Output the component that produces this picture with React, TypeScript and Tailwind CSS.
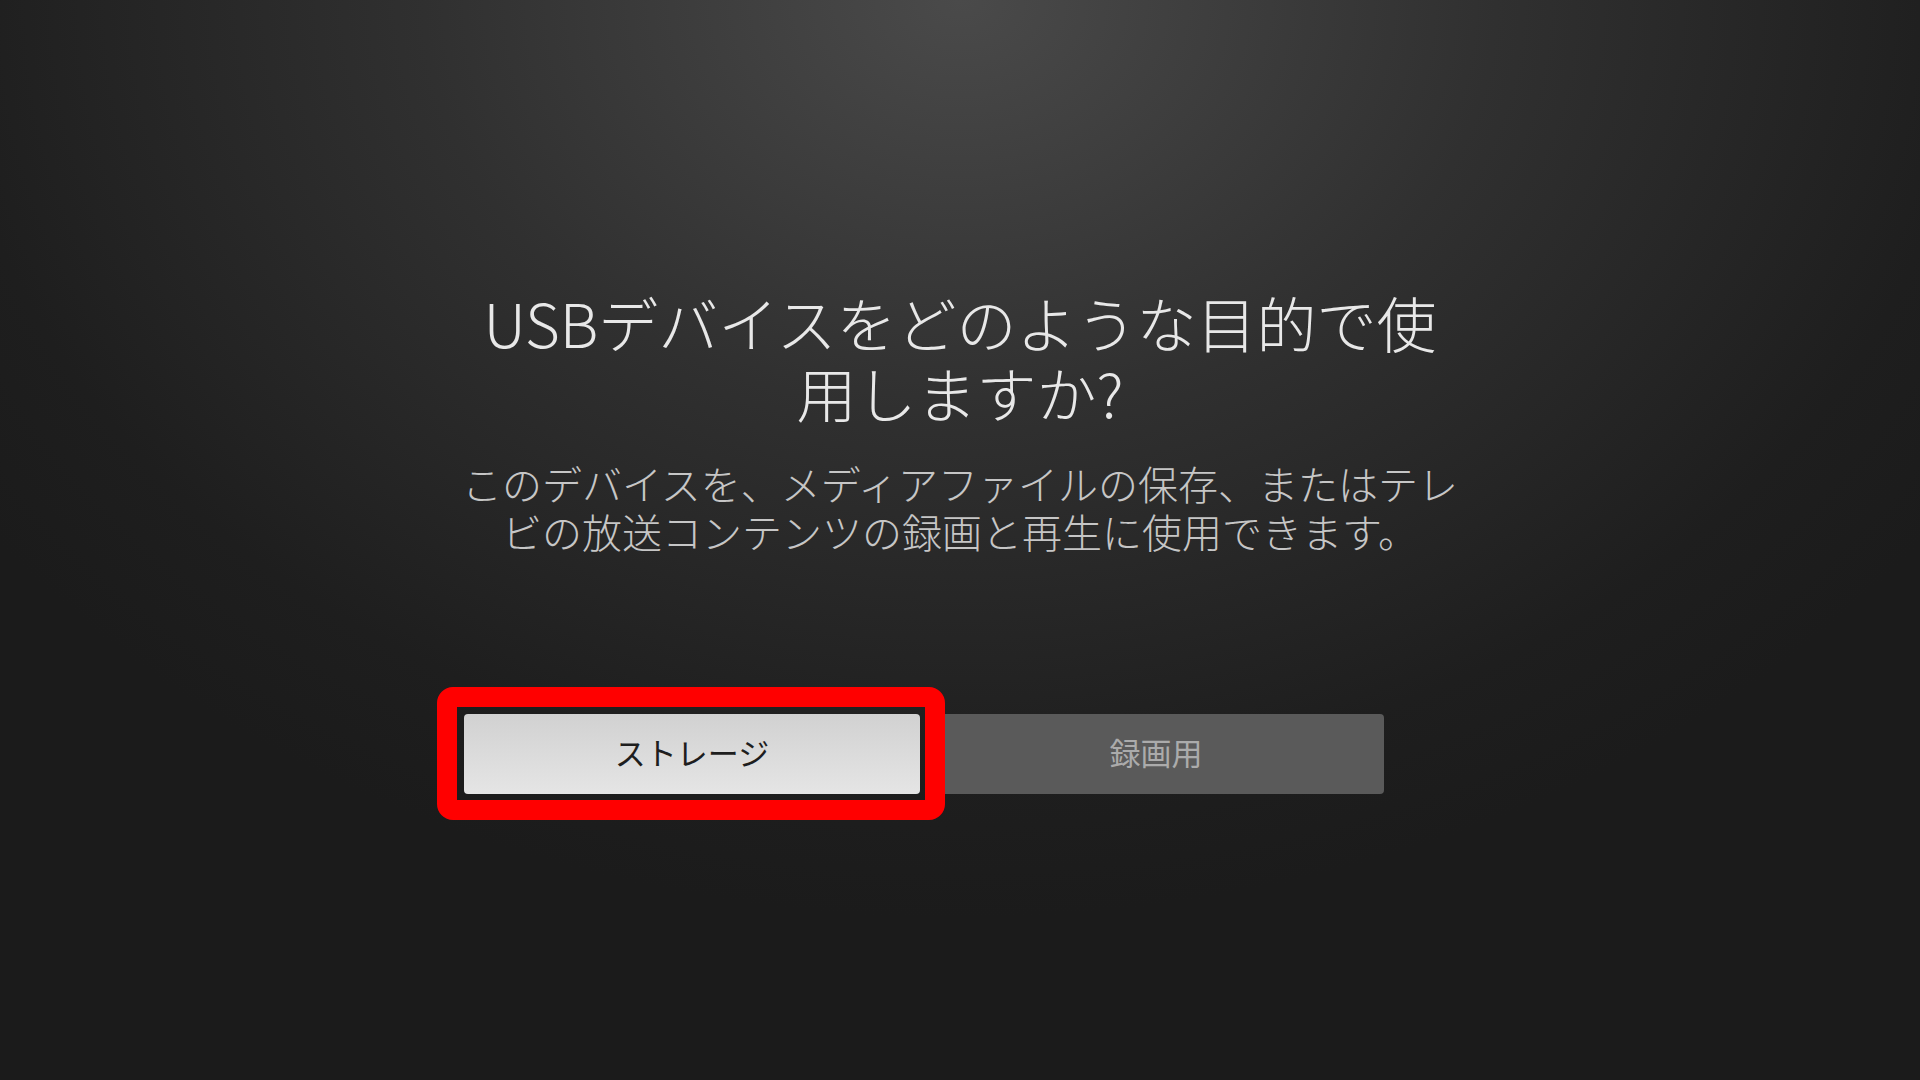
import React from 'react';

const jp = 'font-["Noto_Sans_CJK_JP","Noto_Sans",sans-serif]';

export default function App() {
  return (
    <div
      className={`flex h-screen w-full flex-col items-center justify-center bg-[#1b1b1b] bg-[radial-gradient(ellipse_62%_85%_at_50%_0%,#4a4a4a_0%,#303030_45%,#1e1e1e_85%,#1b1b1b_100%)] ${jp}`}
    >
      {/* Question */}
      <h1 className="text-center text-[60px] font-light leading-[70px] text-[#e8e8e8]">
        USBデバイスをどのような目的で使
        <br />
        用しますか?
      </h1>
      <p className="mt-8 whitespace-nowrap text-center text-[40px] font-light leading-[48px] text-[#c6c6c6]">
        このデバイスを、メディアファイルの保存、またはテレ
        <br />
        ビの放送コンテンツの録画と再生に使用できます。
      </p>

      {/* Choices */}
      <div className="mt-[159px] flex w-[992px] gap-2">
        <div className="relative">
          <button className="flex h-[80px] w-[456px] items-center justify-center rounded-[4px] bg-[linear-gradient(to_bottom,#d1d1d1,#e5e5e5)] pb-1 text-[31px] leading-none text-[#1e1e1e]">
            ストレージ
          </button>
          {/* highlight frame */}
          <div className="pointer-events-none absolute -top-[27px] -bottom-[26px] -left-[27px] -right-[25px] z-10 rounded-[16px] border-[20px] border-[#ff0000]" />
        </div>
        <button className="flex h-[80px] w-[456px] items-center justify-center rounded-[4px] bg-[#5a5a5a] pb-1 text-[31px] leading-none text-[#ababab]">
          録画用
        </button>
      </div>
    </div>
  );
}
